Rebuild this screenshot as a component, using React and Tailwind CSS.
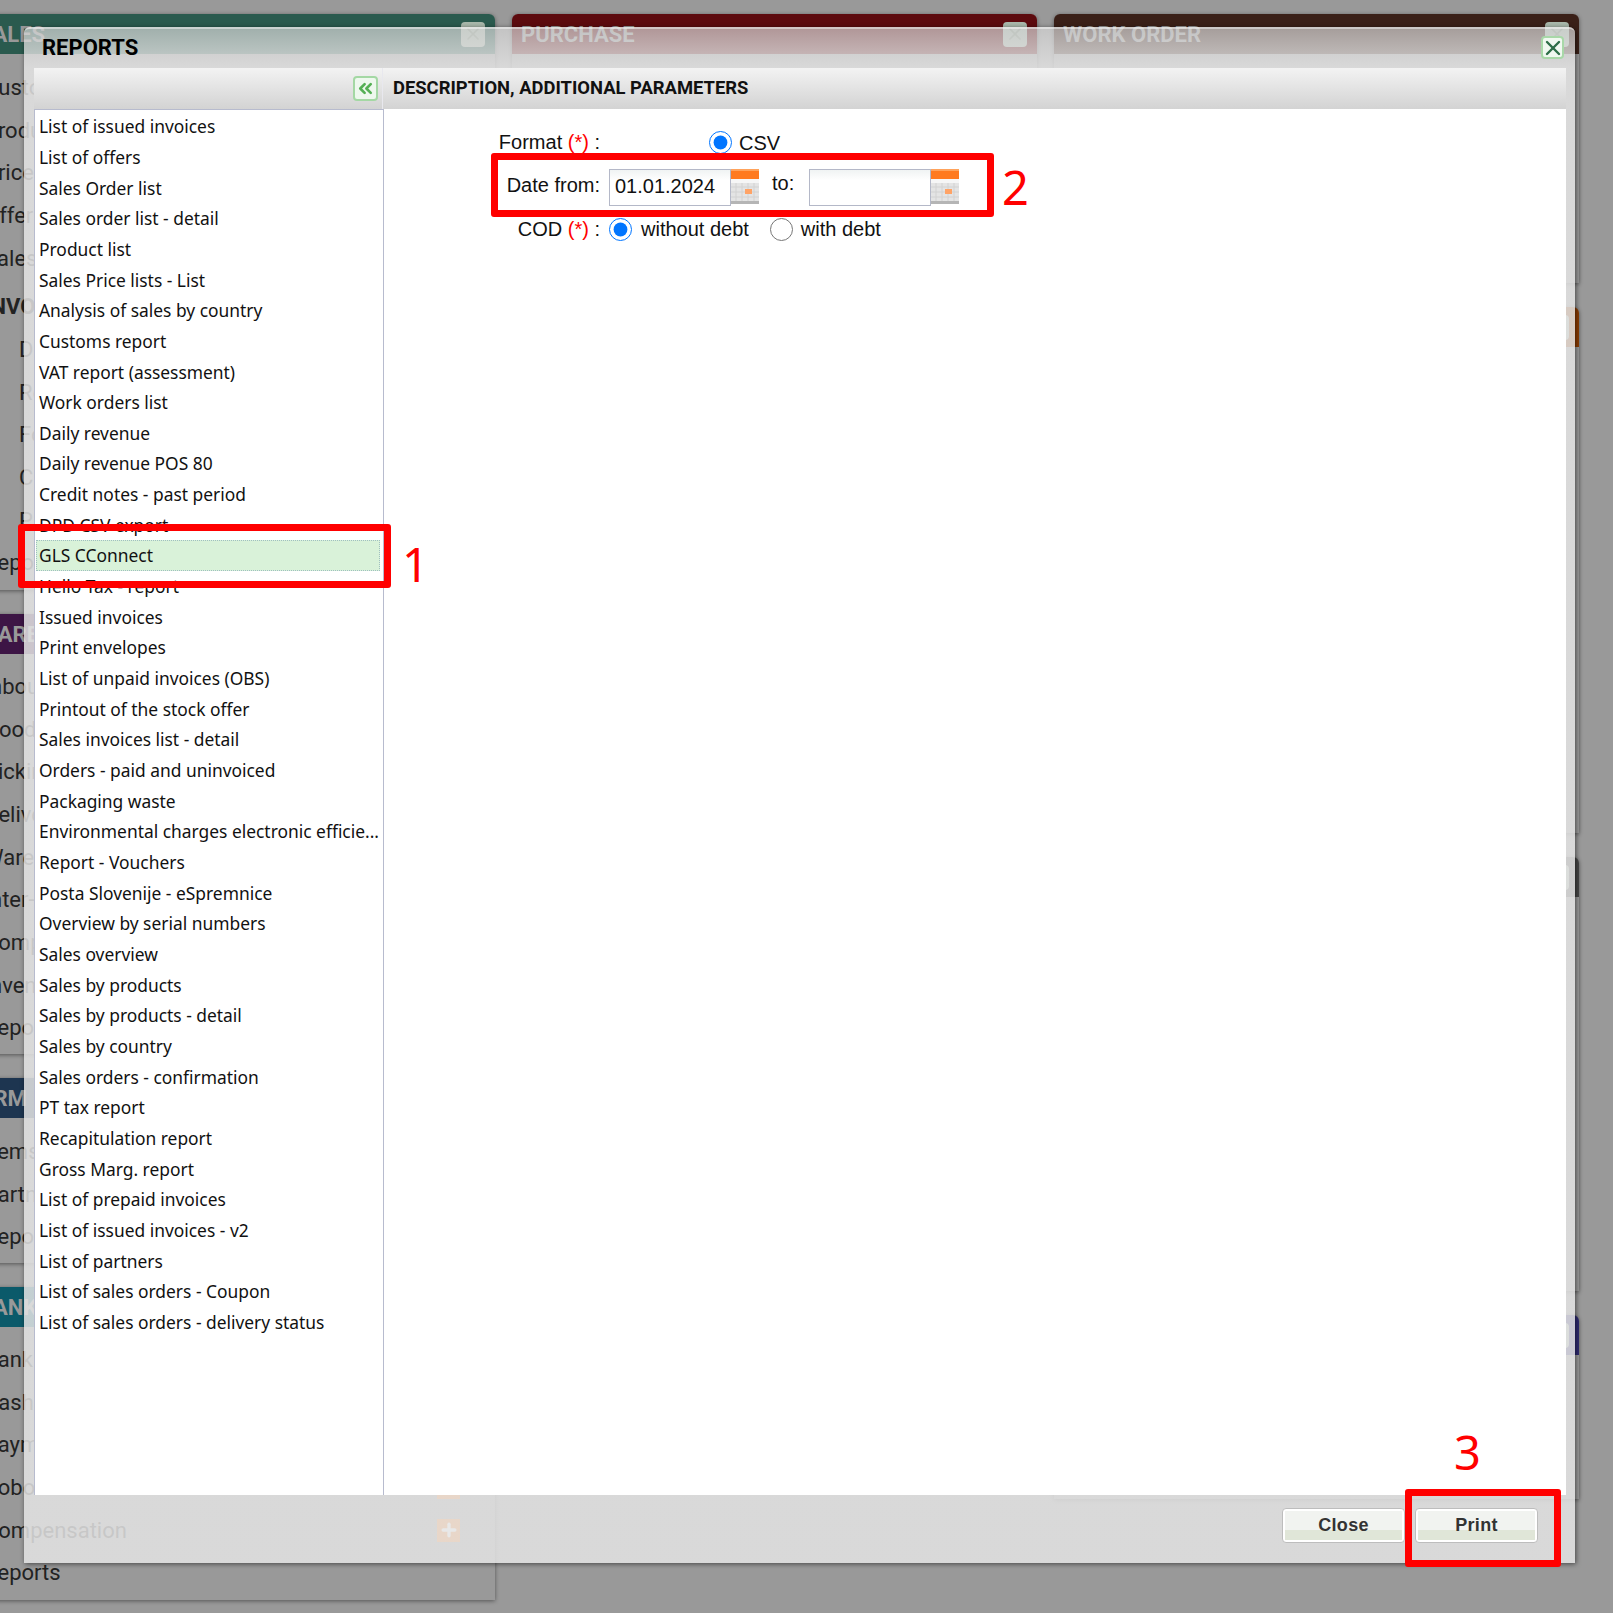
import { ChevronsLeft, Plus, X } from 'lucide-react';

const reports = [
  'List of issued invoices',
  'List of offers',
  'Sales Order list',
  'Sales order list - detail',
  'Product list',
  'Sales Price lists - List',
  'Analysis of sales by country',
  'Customs report',
  'VAT report (assessment)',
  'Work orders list',
  'Daily revenue',
  'Daily revenue POS 80',
  'Credit notes - past period',
  'DPD CSV export',
  'GLS CConnect',
  'Hello Tax - report',
  'Issued invoices',
  'Print envelopes',
  'List of unpaid invoices (OBS)',
  'Printout of the stock offer',
  'Sales invoices list - detail',
  'Orders - paid and uninvoiced',
  'Packaging waste',
  'Environmental charges electronic efficie...',
  'Report - Vouchers',
  'Posta Slovenije - eSpremnice',
  'Overview by serial numbers',
  'Sales overview',
  'Sales by products',
  'Sales by products - detail',
  'Sales by country',
  'Sales orders - confirmation',
  'PT tax report',
  'Recapitulation report',
  'Gross Marg. report',
  'List of prepaid invoices',
  'List of issued invoices - v2',
  'List of partners',
  'List of sales orders - Coupon',
  'List of sales orders - delivery status',
];

function BgRow({ label, indent, bold, plus }) {
  return (
    <div className={`flex h-[42.7px] items-center justify-between pr-[35px] text-[22px] text-[#222] ${indent ? 'pl-[49px]' : 'pl-[14px]'} ${bold ? 'mt-[6px] font-bold' : ''}`}>
      <span>{label}</span>
      {plus && (
        <span className="flex h-[23px] w-[23px] items-center justify-center bg-[#ff8a30]">
          <Plus size={20} strokeWidth={4} className="text-white" />
        </span>
      )}
    </div>
  );
}

function BgCard({ title, color, className, children }) {
  return (
    <div className={`rounded-t-[6px] shadow-[0_1px_4px_rgba(0,0,0,0.45)] ${className}`}>
      <div className={`flex h-[40px] items-center justify-between rounded-t-[6px] pl-[9px] pr-[10px] text-[22px] font-bold text-[#999] ${color}`}>
        <span>{title}</span>
        <span className="flex h-[25px] w-[24px] items-center justify-center rounded-[4px] bg-[#a9b8ab]">
          <X size={20} className="text-[#8a9a8a]" />
        </span>
      </div>
      {children}
    </div>
  );
}

function Background() {
  return (
    <div className="-ml-[30px] flex gap-[17px] pt-[14px]">
      <div className="flex w-[525px] flex-col gap-[24px]">
        <BgCard title="SALES" color="bg-[#2a5a4e]" className="h-[576px]">
          <div className="pt-[12px]">
            <BgRow label="Customers" />
            <BgRow label="Products" />
            <BgRow label="Price lists" />
            <BgRow label="Offers" />
            <BgRow label="Sales orders" />
            <BgRow label="INVOICES" bold />
            <BgRow label="Delivery notes" indent />
            <BgRow label="Retail" indent />
            <BgRow label="Foreign" indent />
            <BgRow label="Credit" indent />
            <BgRow label="Proforma" indent />
            <BgRow label="Reports" />
          </div>
        </BgCard>
        <BgCard title="WAREHOUSE" color="bg-[#3d1545]" className="h-[440px]">
          <div className="pt-[11px]">
            <BgRow label="Inbound" />
            <BgRow label="Goods" />
            <BgRow label="Picking" />
            <BgRow label="Delivery" />
            <BgRow label="Warehouse" />
            <BgRow label="Inter-transfer" />
            <BgRow label="Compare" />
            <BgRow label="Inventory" />
            <BgRow label="Reports" />
          </div>
        </BgCard>
        <BgCard title="CRM" color="bg-[#1d3550]" className="h-[185px]">
          <div className="pt-[12px]">
            <BgRow label="Items" />
            <BgRow label="Partners" />
            <BgRow label="Reports" />
          </div>
        </BgCard>
        <BgCard title="BANK" color="bg-[#0b5a6a]" className="h-[313px]">
          <div className="pt-[11px]">
            <BgRow label="Bank" />
            <BgRow label="Cash" />
            <BgRow label="Payments" />
            <BgRow label="Pobot" plus />
            <BgRow label="Compensation" plus />
            <BgRow label="Reports" />
          </div>
        </BgCard>
      </div>
      <div className="flex w-[525px] flex-col">
        <BgCard title="PURCHASE" color="bg-[#5c0a0e]" className="h-[1386px]" />
      </div>
      <div className="flex w-[525px] flex-col gap-[24px]">
        <BgCard title="WORK ORDER" color="bg-[#3a2018]" className="h-[269px]" />
        <BgCard title="" color="bg-[#8a3a00]" className="h-[526px]" />
        <BgCard title="" color="bg-[#474747]" className="h-[434px]" />
        <BgCard title="" color="bg-[#2e2a70]" className="h-[184px]" />
      </div>
    </div>
  );
}

function CalendarIcon() {
  return (
    <svg width="28" height="36" viewBox="0 0 28 36" className="block shrink-0">
      <rect x="0" y="0" width="28" height="36" fill="#e4e4e4" />
      <rect x="0" y="0" width="28" height="2" fill="#ffa35c" />
      <rect x="0" y="2" width="28" height="8" fill="#ff7a1f" />
      <rect x="0" y="10" width="28" height="4" fill="#f6f6f6" />
      <path d="M0 18h28M0 23h28M0 28h28M5 14v18M11 14v18M17 14v18M23 14v18" stroke="#d2d2d2" strokeWidth="1" />
      <rect x="14" y="20" width="7" height="5" fill="#ffa366" />
      <rect x="0" y="32" width="28" height="3" fill="#b5b5b5" />
      <rect x="0" y="35" width="28" height="1" fill="#fff" />
    </svg>
  );
}

function Required({ label }) {
  return (
    <span>
      {label} <span className="text-[#f00]">(*)</span> :
    </span>
  );
}

function DateField({ value }) {
  return (
    <div className="flex items-start">
      <input
        readOnly
        defaultValue={value}
        className="h-[37px] w-[122px] border border-[#b4b8c8] bg-gradient-to-b from-[#f0f3f3] to-white to-30% px-[5px] pb-[2px] text-[20px] text-[#111] outline-none"
      />
      <CalendarIcon />
    </div>
  );
}

function DialogButton({ children }) {
  return (
    <button className="relative h-[35px] w-[123px] overflow-hidden rounded-[4px] border border-[#bdbdbd] bg-white p-[2px] text-[18px] font-bold text-[#333]">
      <span className="flex h-full w-full flex-col">
        <span className="h-[19px] bg-[#f1f3f0]" />
        <span className="flex-1 bg-[#e0e6d8]" />
      </span>
      <span className="absolute inset-0 flex items-center justify-center pb-[1px] tracking-[0.3px]">{children}</span>
    </button>
  );
}

function Modal() {
  return (
    <div className="absolute left-[24px] top-[27px] flex h-[1536px] w-[1551px] flex-col rounded-t-[6px] bg-[linear-gradient(180deg,rgba(215,215,215,0.68)_0px,rgba(228,228,228,0.85)_41px)] shadow-[1px_1px_5px_rgba(0,0,0,0.55)]">
      <div className="relative h-[41px] shrink-0 rounded-t-[6px] border-t-2 border-[rgba(255,255,255,0.45)] pl-[18px] pt-[4px] text-[22px] font-bold leading-[30px] text-black">
        REPORTS
        <button className="absolute right-[11px] top-[7px] flex h-[23px] w-[23px] items-center justify-center rounded-[4px] border-2 border-[#a8d8a8] bg-[#f0f8f0]">
          <X size={24} strokeWidth={2.4} className="shrink-0 text-[#2e6e48]" />
        </button>
      </div>

      <div className="ml-[10px] mr-[9px] flex min-h-0 flex-1 flex-col bg-white">
        <div className="flex h-[41px] shrink-0 bg-gradient-to-b from-[#f3f3f3] to-[#d3d3d3]">
          <div className="flex w-[349px] items-center justify-end border-r border-[#e8e8ee] pr-[4px]">
            <button className="flex h-[25px] w-[25px] items-center justify-center rounded-[4px] border-2 border-[#a4d8a4] bg-[#eef8ee]">
              <ChevronsLeft size={21} strokeWidth={3} className="text-[#55b055]" />
            </button>
          </div>
          <div className="flex flex-1 items-center pb-[1px] pl-[10px] text-[18.4px] font-bold text-[#111]">
            DESCRIPTION, ADDITIONAL PARAMETERS
          </div>
        </div>

        <div className="flex min-h-0 flex-1">
          <div className="w-[350px] shrink-0 border-x border-t border-[#b7bbce] pl-[1px] pt-[1px] font-['Noto_Sans',sans-serif] text-[17.4px] text-[#111]">
            {reports.map((name, i) => (
              <div
                key={name}
                className={`flex h-[30.67px] items-center whitespace-nowrap ${i === 14 ? 'mr-[3px] border border-dotted border-[#9fbfc0] bg-[#d9f2d9] pl-[2px]' : 'pl-[3px]'}`}
              >
                {name}
              </div>
            ))}
          </div>

          <div className="flex-1 pt-[21px] font-['Liberation_Sans',sans-serif] text-[20px] text-[#111]">
            <div className="flex h-[24px] items-center">
              <div className="w-[216px] text-right"><Required label="Format" /></div>
              <input type="radio" name="format" defaultChecked className="m-0 ml-[109px] h-[23px] w-[23px] accent-[#0075ff]" />
              <span className="ml-[7px] mt-[2px]">CSV</span>
            </div>
            <div className="flex h-[63px] items-center">
              <div className="mb-[2px] w-[216px] text-right">Date from:</div>
              <div className="ml-[9px] mt-[4px] flex items-start">
                <DateField value="01.01.2024" />
                <span className="-mt-[1px] ml-[13px] mr-[14px] w-[23px]">to:</span>
                <DateField value="" />
              </div>
            </div>
            <div className="flex h-[24px] items-center">
              <div className="mb-[1px] w-[216px] text-right"><Required label="COD" /></div>
              <input type="radio" name="cod" defaultChecked className="m-0 ml-[9px] h-[23px] w-[23px] accent-[#0075ff]" />
              <span className="ml-[9px]">without debt</span>
              <input type="radio" name="cod" className="m-0 ml-[21px] h-[23px] w-[23px] accent-[#0075ff]" />
              <span className="ml-[8px]">with debt</span>
            </div>
          </div>
        </div>
      </div>

      <div className="flex h-[68px] shrink-0 justify-end gap-[10px] pr-[37px] pt-[13px] font-['Liberation_Sans',sans-serif]">
        <DialogButton>Close</DialogButton>
        <DialogButton>Print</DialogButton>
      </div>
    </div>
  );
}

function Callout({ className }) {
  return <div className={`absolute rounded-[3px] border-[7px] border-[#f00] ${className}`} />;
}

function Digit({ className, children }) {
  return (
    <div className={`absolute font-['Noto_Sans',sans-serif] text-[47px] leading-none text-[#f00] ${className}`}>
      {children}
    </div>
  );
}

export default function App() {
  return (
    <div className="relative h-[1613px] w-[1613px] overflow-hidden bg-[#999] font-['Roboto',sans-serif]">
      <Background />
      <Modal />
      <Callout className="left-[18px] top-[524px] h-[64px] w-[373px]" />
      <Callout className="left-[491px] top-[153px] h-[64px] w-[503px]" />
      <Callout className="left-[1405px] top-[1489px] h-[78px] w-[156px]" />
      <Digit className="left-[402px] top-[541px]">1</Digit>
      <Digit className="left-[1002px] top-[164px]">2</Digit>
      <Digit className="left-[1454px] top-[1429px]">3</Digit>
    </div>
  );
}
